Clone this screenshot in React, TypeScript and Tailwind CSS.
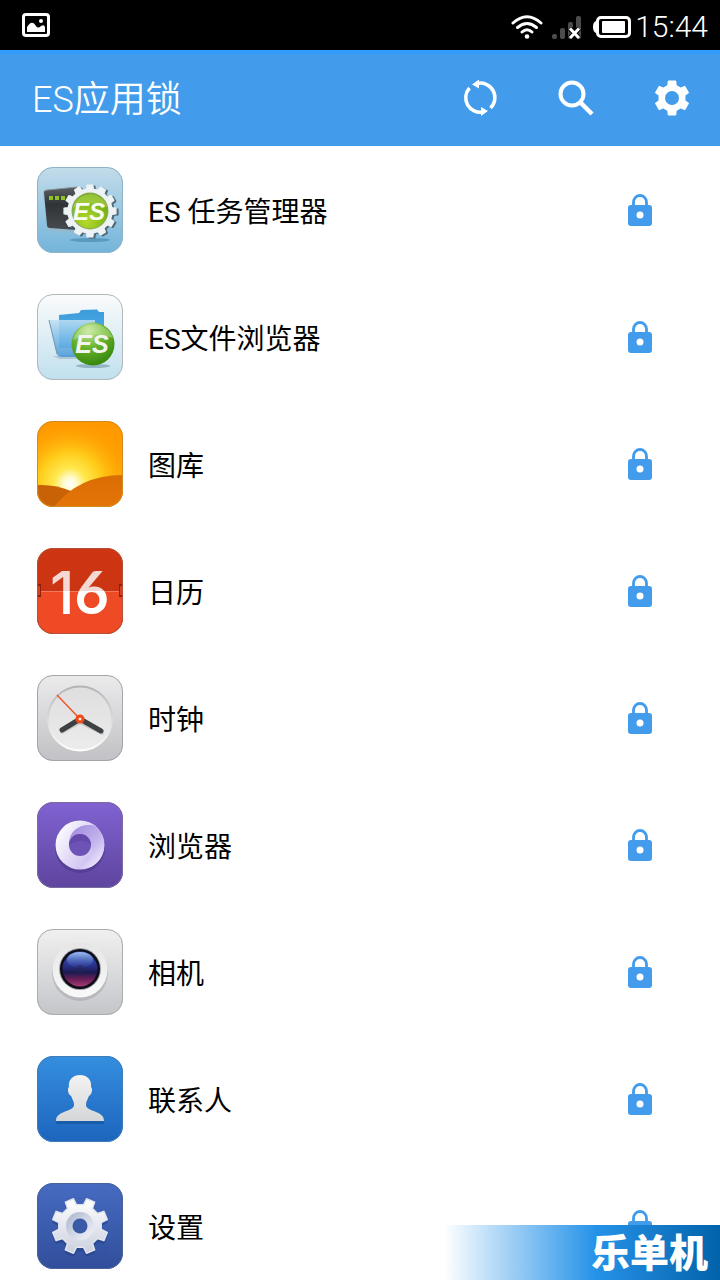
import type { ReactNode } from "react";

interface AppEntry {
  name: string;
  icon: ReactNode;
}

// Outline of a cog wheel; `offset` turns it, in degrees
function gearPath(
  cx: number,
  cy: number,
  teeth: number,
  outer: number,
  inner: number,
  offset = 0
) {
  const step = (Math.PI * 2) / teeth;
  const start = ((offset - 90) * Math.PI) / 180;
  const points: string[] = [];
  for (let i = 0; i < teeth; i++) {
    const a = start + i * step;
    const corners = [
      [inner, -0.29],
      [outer, -0.2],
      [outer, 0.2],
      [inner, 0.29],
    ];
    for (const [r, t] of corners) {
      const x = cx + r * Math.cos(a + t * step);
      const y = cy + r * Math.sin(a + t * step);
      points.push(`${x.toFixed(2)} ${y.toFixed(2)}`);
    }
  }
  return `M${points.join("L")}Z`;
}

// =========================
// App icons
// =========================
interface TileProps {
  id: string;
  from: string;
  to: string;
  edge: string;
  children: ReactNode;
}

function Tile({ id, from, to, edge, children }: TileProps) {
  return (
    <svg viewBox="0 0 86 86" className="size-[86px] shrink-0" aria-hidden="true">
      <defs>
        <linearGradient id={`${id}-bg`} x1="0" y1="0" x2="0" y2="1">
          <stop offset="0" stopColor={from} />
          <stop offset="1" stopColor={to} />
        </linearGradient>
        <clipPath id={`${id}-clip`}>
          <rect width="86" height="86" rx="16" />
        </clipPath>
      </defs>
      <g clipPath={`url(#${id}-clip)`}>
        <rect width="86" height="86" fill={`url(#${id}-bg)`} />
        {children}
      </g>
      <rect x=".5" y=".5" width="85" height="85" rx="15.5" fill="none" stroke={edge} />
    </svg>
  );
}

function TaskManagerIcon() {
  return (
    <Tile id="task" from="#c3dcea" to="#73b4da" edge="#8fb3c6">
      <defs>
        <linearGradient id="task-screen" x1="0" y1="0" x2="0" y2="1">
          <stop offset="0" stopColor="#5b6063" />
          <stop offset=".4" stopColor="#303335" />
          <stop offset="1" stopColor="#454b4f" />
        </linearGradient>
        <radialGradient id="task-ball" cx=".4" cy=".8" r=".8">
          <stop offset="0" stopColor="#b5d92c" />
          <stop offset=".6" stopColor="#85bd1d" />
          <stop offset="1" stopColor="#6aa516" />
        </radialGradient>
      </defs>
      <ellipse cx="53" cy="73" rx="20" ry="2" fill="#3c7fa6" opacity=".55" />
      <path d="M6 24L10 62Q11 64 14 64L42 67V61L12 60L9 25Z" fill="#93b9cf" />
      <path d="M7 25Q7 23 10 23L40 20V63L13 61Q10 61 10 58Z" fill="url(#task-screen)" />
      <path d="M7 25Q7 23 10 23L40 20" stroke="#87979f" fill="none" />
      <path d="M12 29h4v4h-4zM18 29h4v4h-4zM24 29h4v4h-4z" fill="#8fc321" />
      <path d={gearPath(55, 45, 12, 26, 22)} fill="#4f6b79" stroke="#4f6b79" strokeWidth="1.5" strokeLinejoin="round" />
      <path d={gearPath(53, 44, 12, 26, 22)} fill="#edf3f5" stroke="#edf3f5" strokeWidth="1.5" strokeLinejoin="round" />
      <circle cx="53" cy="44" r="18.5" fill="#8ea65c" />
      <circle cx="53" cy="44" r="17.5" fill="url(#task-ball)" />
      <path d="M36 41a17.500 17.500 0 0 1 34-1Q54 32 36 41Z" fill="#b8d955" opacity=".55" />
      <text x="52" y="53" textAnchor="middle" fontFamily="Liberation Sans, sans-serif" fontSize="24" fontWeight="700" fontStyle="italic" fill="#fafcf2">
        ES
      </text>
    </Tile>
  );
}

function FileExplorerIcon() {
  return (
    <Tile id="files" from="#fbfbfb" to="#c0e0ef" edge="#b1b7ba">
      <defs>
        <linearGradient id="files-back" x1="0" y1="0" x2="0" y2="1">
          <stop offset="0" stopColor="#3c9cdc" />
          <stop offset="1" stopColor="#58b1ea" />
        </linearGradient>
        <linearGradient id="files-front" x1="0" y1="0" x2="0" y2="1">
          <stop offset="0" stopColor="#c2e0f4" />
          <stop offset=".45" stopColor="#81bfe9" />
          <stop offset="1" stopColor="#4796d6" />
        </linearGradient>
        <radialGradient id="files-ball" cx=".4" cy=".2" r=".85">
          <stop offset="0" stopColor="#c7e79d" />
          <stop offset=".45" stopColor="#6bb431" />
          <stop offset="1" stopColor="#308307" />
        </radialGradient>
      </defs>
      <path d="M16 62L22 65H42V60Z" fill="#94aab5" opacity=".5" />
      <ellipse cx="56" cy="72" rx="17" ry="2" fill="#6a95a5" opacity=".6" />
      <path d="M22 21L42 19L44 16L60 15.500L62 18L67 18V54H22Z" fill="url(#files-back)" />
      <path d="M12 26L20 60Q21 63 25 63H45L58 58V26Z" fill="url(#files-front)" opacity=".85" />
      <path d="M12 26L20 60" stroke="#7496ac" strokeWidth="1" />
      <circle cx="56" cy="50" r="21.5" fill="url(#files-ball)" />
      <path d="M36 46a21 21 0 0 1 40-2Q56 36 36 46Z" fill="#d3efb1" opacity=".4" />
      <text x="55" y="59" textAnchor="middle" fontFamily="Liberation Sans, sans-serif" fontSize="25" fontWeight="700" fontStyle="italic" fill="#f2f5ef">
        ES
      </text>
    </Tile>
  );
}

function GalleryIcon() {
  return (
    <Tile id="gallery" from="#ff9800" to="#ffa800" edge="#d38a22">
      <defs>
        <radialGradient id="gallery-sun" gradientUnits="userSpaceOnUse" cx="33" cy="63" r="64">
          <stop offset="0" stopColor="#ffffff" />
          <stop offset=".1" stopColor="#fffbd0" />
          <stop offset=".25" stopColor="#ffe84e" />
          <stop offset=".5" stopColor="#ffcb18" />
          <stop offset="1" stopColor="#ff9a00" stopOpacity="0" />
        </radialGradient>
        <linearGradient id="gallery-hill" x1="0" y1="0" x2="0" y2="1">
          <stop offset="0" stopColor="#d96c04" />
          <stop offset="1" stopColor="#e57507" />
        </linearGradient>
      </defs>
      <rect width="86" height="86" fill="url(#gallery-sun)" />
      <path d="M0 64Q18 63 34 70V86H0Z" fill="#c96207" />
      <path d="M17 86Q42 54 86 54V86Z" fill="url(#gallery-hill)" />
    </Tile>
  );
}

function CalendarIcon() {
  return (
    <Tile id="calendar" from="#ce3512" to="#c83413" edge="#b34f3a">
      <defs>
        <linearGradient id="calendar-digits" gradientUnits="userSpaceOnUse" x1="0" y1="0" x2="0" y2="86">
          <stop offset=".5" stopColor="#f3d8d3" />
          <stop offset=".5" stopColor="#ffffff" />
        </linearGradient>
      </defs>
      <rect y="43" width="86" height="43" fill="#ee4a25" />
      <path d="M0 43.500H86" stroke="#ef7a5e" strokeWidth="1" />
      <text x="13" y="66" fontSize="59" fill="url(#calendar-digits)">
        <tspan fontFamily="Inter, sans-serif" fontWeight="500">1</tspan>
        <tspan fontFamily="Lato, sans-serif" fontWeight="700">6</tspan>
      </text>
      <path d="M0 36h4v13H0zM82 36h4v13h-4z" fill="#8d210c" />
      <path d="M0 38h3v9H0zM83 38h3v9h-3z" fill="#d8401f" />
    </Tile>
  );
}

function ClockIcon() {
  return (
    <Tile id="clock" from="#ebebec" to="#c1c1c5" edge="#a5a5a8">
      <defs>
        <linearGradient id="clock-rim" x1="0" y1="0" x2="0" y2="1">
          <stop offset="0" stopColor="#b4b4b6" />
          <stop offset="1" stopColor="#ffffff" />
        </linearGradient>
        <linearGradient id="clock-face" x1="0" y1="0" x2="0" y2="1">
          <stop offset="0" stopColor="#dededf" />
          <stop offset="1" stopColor="#ececed" />
        </linearGradient>
      </defs>
      <circle cx="43" cy="43.500" r="32" fill="url(#clock-face)" stroke="url(#clock-rim)" strokeWidth="2" />
      <path d="M25 57L43 47L65 58" fill="none" stroke="#8e8e90" strokeWidth="4" strokeLinecap="round" opacity=".3" />
      <path d="M25 55L43 44L64 56" fill="none" stroke="#3d4144" strokeWidth="5" strokeLinecap="round" />
      <path d="M20 20L43 44" stroke="#f0552a" strokeWidth="1.500" />
      <circle cx="43" cy="44" r="4.500" fill="#ee4b17" />
      <circle cx="43" cy="44" r="1.500" fill="#ffe5dc" />
    </Tile>
  );
}

function BrowserIcon() {
  return (
    <Tile id="browser" from="#8062d2" to="#5e459d" edge="#7b6ba3">
      <defs>
        <linearGradient id="browser-ring" x1="0" y1=".2" x2="1" y2=".8">
          <stop offset="0" stopColor="#ffffff" />
          <stop offset=".5" stopColor="#ded5f6" />
          <stop offset="1" stopColor="#c3b4ec" />
        </linearGradient>
        <linearGradient id="browser-fold" x1="0" y1="0" x2=".8" y2="1">
          <stop offset="0" stopColor="#9d85dc" />
          <stop offset=".6" stopColor="#c4b5ee" />
          <stop offset="1" stopColor="#f1ecfd" />
        </linearGradient>
      </defs>
      <circle cx="43" cy="46" r="25" fill="#493282" opacity=".5" />
      <circle cx="43" cy="43" r="24.500" fill="url(#browser-ring)" />
      <path d="M32 44C31 29 43 21 57 23.500A24.500 24.500 0 0 1 55 64.500C48 67 42 67 38 66C53 62 58 52 53.500 43A11 11 0 0 0 32 44Z" fill="url(#browser-fold)" />
      <circle cx="43" cy="43" r="11" fill="#6e53b6" />
      <path d="M32 43a11 11 0 0 1 22 0q-8-8-22 0Z" fill="#58409c" opacity=".5" />
    </Tile>
  );
}

function CameraIcon() {
  return (
    <Tile id="camera" from="#f0f0f0" to="#c4c5c9" edge="#abacae">
      <defs>
        <linearGradient id="camera-ring" x1="0" y1="0" x2="0" y2="1">
          <stop offset="0" stopColor="#e6e6e7" />
          <stop offset="1" stopColor="#f9f9f9" />
        </linearGradient>
        <linearGradient id="camera-lens" x1="0" y1="0" x2="0" y2="1">
          <stop offset="0" stopColor="#3859b7" />
          <stop offset=".4" stopColor="#29318c" />
          <stop offset=".6" stopColor="#1c1b50" />
          <stop offset=".8" stopColor="#6c1f58" />
          <stop offset="1" stopColor="#a53d72" />
        </linearGradient>
        <linearGradient id="camera-shine" x1="0" y1="0" x2="0" y2="1">
          <stop offset="0" stopColor="#a0bdf2" />
          <stop offset="1" stopColor="#4260b9" stopOpacity=".1" />
        </linearGradient>
      </defs>
      <circle cx="43" cy="44" r="28" fill="#85868a" opacity=".3" />
      <circle cx="43" cy="41" r="27.500" fill="url(#camera-ring)" />
      <circle cx="43" cy="40" r="21" fill="#9d9ea2" />
      <circle cx="43" cy="40" r="20" fill="#0c0c18" />
      <circle cx="43" cy="40" r="17.500" fill="url(#camera-lens)" />
      <ellipse cx="43" cy="31" rx="13" ry="8" fill="url(#camera-shine)" />
      <circle cx="43" cy="41" r="5" fill="#252451" opacity=".4" />
    </Tile>
  );
}

function ContactsIcon() {
  return (
    <Tile id="contacts" from="#358edf" to="#1d65bd" edge="#3e7eb9">
      <defs>
        <linearGradient id="contacts-person" x1="0" y1="0" x2="0" y2="1">
          <stop offset="0" stopColor="#f3f3f3" />
          <stop offset="1" stopColor="#d5d6d8" />
        </linearGradient>
      </defs>
      <path
        d="M43 22C35 22 32 28 33 33C30 34 32 40 35 42C37 46 38 51 34 54C27 57 20 60 19 68H67C66 60 59 57 52 54C48 51 49 46 51 42C54 40 56 34 53 33C54 28 51 22 43 22Z"
        fill="#164e98"
        opacity=".6"
      />
      <path
        d="M43 19C35 19 31 25 32 31C30 32 31 39 34 40C35 43 37 45 37 49C37 53 31 54 27 56C22 58 19 60 19 65H67C67 60 64 58 59 56C55 54 49 53 49 49C49 45 51 43 52 40C55 39 56 32 54 31C55 25 51 19 43 19Z"
        fill="url(#contacts-person)"
      />
    </Tile>
  );
}

function SystemSettingsIcon() {
  return (
    <Tile id="system" from="#466bc1" to="#314e9b" edge="#4b6299">
      <defs>
        <linearGradient id="system-gear" x1="0" y1="0" x2="0" y2="1">
          <stop offset="0" stopColor="#ffffff" />
          <stop offset="1" stopColor="#cbd0de" />
        </linearGradient>
        <linearGradient id="system-dish" x1="0" y1="0" x2="1" y2="1">
          <stop offset="0" stopColor="#aab4cd" />
          <stop offset="1" stopColor="#f6f7fb" />
        </linearGradient>
      </defs>
      <path d={gearPath(43, 46, 8, 28, 22, 22.5)} fill="#233d7f" opacity=".5" stroke="#233d7f" strokeLinejoin="round" />
      <path d={gearPath(43, 43, 8, 28, 21.5, 22.5)} fill="url(#system-gear)" stroke="#e3e6ee" strokeWidth="1.500" strokeLinejoin="round" />
      <circle cx="43" cy="43" r="14" fill="url(#system-dish)" />
      <circle cx="43" cy="43" r="7.500" fill="#3a59a6" />
    </Tile>
  );
}

const apps: AppEntry[] = [
  { name: "ES 任务管理器", icon: <TaskManagerIcon /> },
  { name: "ES文件浏览器", icon: <FileExplorerIcon /> },
  { name: "图库", icon: <GalleryIcon /> },
  { name: "日历", icon: <CalendarIcon /> },
  { name: "时钟", icon: <ClockIcon /> },
  { name: "浏览器", icon: <BrowserIcon /> },
  { name: "相机", icon: <CameraIcon /> },
  { name: "联系人", icon: <ContactsIcon /> },
  { name: "设置", icon: <SystemSettingsIcon /> },
];

// =========================
// Layout
// =========================
function StatusBar() {
  return (
    <div className="flex h-[50px] shrink-0 items-center bg-black pr-3 pl-[22px] text-white">
      <svg viewBox="0 0 28 24" className="h-6 w-7" aria-hidden="true">
        <rect x="1.500" y="1.500" width="25" height="21" rx="2.500" fill="none" stroke="currentColor" strokeWidth="3" />
        <path d="M5 19V14Q10 6 14 13Q16 16 19 13Q22 11 23 14V19Z" fill="currentColor" />
        <circle cx="19" cy="8" r="2" fill="currentColor" />
      </svg>

      <div className="ml-auto flex items-center pt-1">
        <svg viewBox="0 0 32 24" className="h-6 w-8" fill="none" stroke="currentColor" strokeWidth="3" strokeLinecap="round" aria-hidden="true">
          <path d="M2 8Q16-4.500 30 8" />
          <path d="M6.500 12.500Q16 4.500 25.500 12.500" />
          <path d="M11 17Q16 12.500 21 17" />
          <circle cx="16" cy="21.500" r="2.300" fill="currentColor" stroke="none" />
        </svg>
        <svg viewBox="0 0 30 24" className="ml-2 h-6 w-[30px]" aria-hidden="true">
          <g fill="#4c4c4c">
            <rect x="1" y="19" width="5" height="5" rx="2" />
            <rect x="9" y="13" width="5" height="11" rx="2" />
            <rect x="17" y="7" width="5" height="17" rx="2" />
            <rect x="25" y="1" width="5" height="23" rx="2" />
          </g>
          <path d="M19 13.500L28 23M28 13.500L19 23" stroke="#000" strokeWidth="5" />
          <path d="M19 13.500L28 23M28 13.500L19 23" stroke="#fff" strokeWidth="3" />
        </svg>
        <svg viewBox="0 0 38 22" className="ml-3 h-[22px] w-[38px]" aria-hidden="true">
          <path d="M5 5H3Q0 6 0 11T3 17H5Z" fill="currentColor" />
          <rect x="4.500" y="1.500" width="32" height="19" rx="3.500" fill="none" stroke="currentColor" strokeWidth="3" />
          <rect x="9" y="5" width="23" height="12" rx="1" fill="currentColor" />
        </svg>
        <time className="ml-1 text-3xl font-light">15:44</time>
      </div>
    </div>
  );
}

function Toolbar() {
  return (
    <header className="flex h-24 shrink-0 items-center bg-[#429ceb] pl-8 text-white shadow-[inset_0_4px_0_#349dfb]">
      <h1 className="pt-1 text-4xl font-[350]">ES应用锁</h1>

      <div className="ml-auto flex">
        <button type="button" aria-label="刷新" className="flex h-20 w-24 items-center justify-center">
          <svg viewBox="0 0 36 36" className="size-9" fill="none" stroke="currentColor" strokeWidth="3.500" aria-hidden="true">
            <path d="M15 3.500A14.500 14.500 0 0 1 28.500 28" />
            <path d="M21 32A14.500 14.500 0 0 1 7.500 8" />
            <path d="M10 4.500L17-.5V8.500ZM26 31L19 27V36Z" fill="currentColor" stroke="none" />
          </svg>
        </button>
        <button type="button" aria-label="搜索" className="flex h-20 w-24 items-center justify-center">
          <svg viewBox="0 0 36 36" className="size-9" fill="none" stroke="currentColor" aria-hidden="true">
            <circle cx="14" cy="14" r="11.500" strokeWidth="4" />
            <path d="M22 22L34 34" strokeWidth="4.500" />
          </svg>
        </button>
        <button type="button" aria-label="设置" className="flex h-20 w-24 items-center justify-center">
          <svg viewBox="0 0 36 36" className="size-9" aria-hidden="true">
            <path d={gearPath(18, 18, 6, 17, 13)} fill="currentColor" stroke="currentColor" strokeWidth="1.500" strokeLinejoin="round" />
            <circle cx="18" cy="18" r="7" fill="#429ceb" />
          </svg>
        </button>
      </div>
    </header>
  );
}

function AppRow({ name, icon }: AppEntry) {
  return (
    <li className="flex h-[127px] items-center pr-14 pl-[37px]">
      {icon}
      <span className="ml-[25px] pt-1.5 text-[28px] leading-9">{name}</span>
      <button type="button" aria-label={`锁定 ${name}`} className="ml-auto flex size-12 items-center justify-center text-[#429ceb]">
        <svg viewBox="0 0 24 32" className="h-8 w-6" aria-hidden="true">
          <path d="M5.500 12V8a6.500 6.500 0 0 1 13 0V12" fill="none" stroke="currentColor" strokeWidth="2.800" />
          <rect y="11" width="24" height="21" rx="3" fill="currentColor" />
          <circle cx="12" cy="21" r="3.500" fill="#fff" />
        </svg>
      </button>
    </li>
  );
}

export default function App() {
  return (
    <div className="relative flex h-screen flex-col overflow-hidden bg-white font-[Roboto,'Noto_Sans_CJK_SC',sans-serif] text-black">
      <StatusBar />
      <Toolbar />

      <main className="min-h-0 flex-1 overflow-hidden">
        <ul>
          {apps.map((app) => (
            <AppRow key={app.name} {...app} />
          ))}
        </ul>
      </main>

      {/* Site badge over the end of the list */}
      <div className="absolute right-0 bottom-0 flex h-[55px] w-[276px] items-center justify-end bg-linear-to-r from-[#1f8fe8]/0 via-[#2592e8] via-55% to-[#0263aa] pt-1 pr-3 text-[39px] leading-none font-black text-white">
        乐单机
      </div>
    </div>
  );
}
